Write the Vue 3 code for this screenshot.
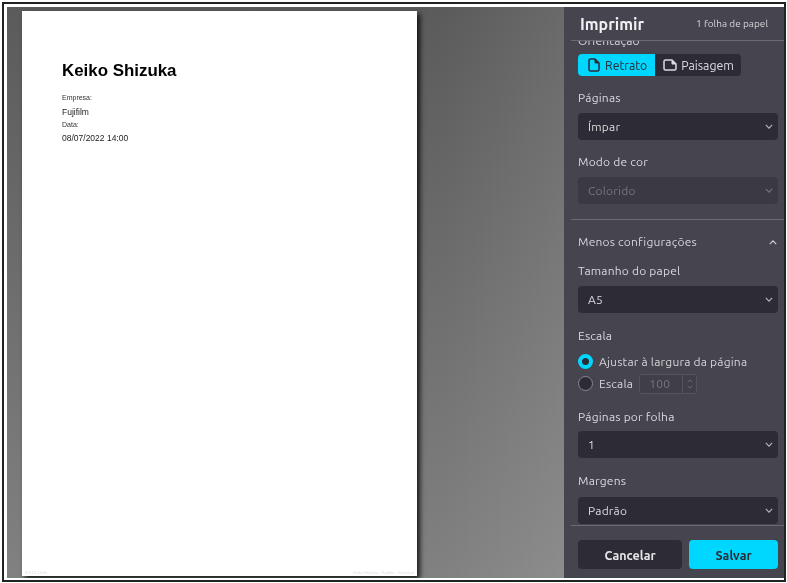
<script setup>
const chevron = 'M1 1l4 4 4-4'
const chevronUp = 'M1 5l4-4 4 4'
</script>

<template>
  <div class="frame">
    <div class="shell">
      <main class="preview">
        <div class="page">
          <h1 class="name">Keiko Shizuka</h1>
          <div class="lbl">Empresa:</div>
          <div class="val">Fujifilm</div>
          <div class="lbl tight">Data:</div>
          <div class="val">08/07/2022 14:00</div>
          <div class="foot"><span>8/7/22 14:00</span><span>Keiko Shizuka - Fujifilm - Relatório</span></div>
        </div>
      </main>
      <aside class="panel">
        <header class="head">
          <span class="title">Imprimir</span>
          <span class="sheets">1 folha de papel</span>
        </header>
        <div class="body">
          <div class="scroll">
            <div class="label clipped">Orientação</div>
            <div class="segs">
              <span class="seg on">
                <svg width="12" height="14" viewBox="0 0 12 14" fill="none" stroke="currentColor" stroke-width="1.5" stroke-linejoin="round"><path d="M1 2.500A1.500 1.500 0 0 1 2.500 1h4.500l4 4v6.500a1.500 1.500 0 0 1-1.500 1.500h-7A1.500 1.500 0 0 1 1 11.500z"/><path d="M7 1v4h4z" fill="currentColor" stroke-width="1"/></svg>
                Retrato
              </span>
              <span class="seg second">
                <svg width="14" height="12" viewBox="0 0 14 12" fill="none" stroke="currentColor" stroke-width="1.500" stroke-linejoin="round"><path d="M1 2.500A1.500 1.500 0 0 1 2.500 1H9l4 4v4.500a1.500 1.500 0 0 1-1.500 1.500h-9A1.500 1.500 0 0 1 1 9.500z"/><path d="M9 1v4h4z" fill="currentColor" stroke-width="1"/></svg>
                Paisagem
              </span>
            </div>

            <div class="label l-pages">Páginas</div>
            <div class="select"><span>Ímpar</span><svg width="8" height="5" viewBox="0 0 10 6"><path :d="chevron" /></svg></div>

            <div class="label l-color">Modo de cor</div>
            <div class="select off"><span>Colorido</span><svg width="8" height="5" viewBox="0 0 10 6"><path :d="chevron" /></svg></div>

            <div class="rule"></div>

            <div class="toggle"><span>Menos configurações</span><svg width="8" height="5" viewBox="0 0 10 6"><path :d="chevronUp" /></svg></div>

            <div class="label l-size">Tamanho do papel</div>
            <div class="select"><span>A5</span><svg width="8" height="5" viewBox="0 0 10 6"><path :d="chevron" /></svg></div>

            <div class="label l-scale">Escala</div>
            <div class="radios">
              <div class="radio-row"><span class="radio on"></span><span>Ajustar à largura da página</span></div>
              <div class="radio-row">
                <span class="radio"></span><span>Escala</span>
                <span class="num">
                  <span class="num-val">100</span>
                  <span class="spin">
                    <svg width="6" height="4" viewBox="0 0 10 6"><path :d="chevronUp" /></svg>
                    <svg width="6" height="4" viewBox="0 0 10 6"><path :d="chevron" /></svg>
                  </span>
                </span>
              </div>
            </div>

            <div class="label l-persheet">Páginas por folha</div>
            <div class="select"><span>1</span><svg width="8" height="5" viewBox="0 0 10 6"><path :d="chevron" /></svg></div>

            <div class="label l-margin">Margens</div>
            <div class="select"><span>Padrão</span><svg width="8" height="5" viewBox="0 0 10 6"><path :d="chevron" /></svg></div>
          </div>
        </div>
        <footer class="actions">
          <button class="btn cancel">Cancelar</button>
          <button class="btn save">Salvar</button>
        </footer>
      </aside>
    </div>
  </div>
</template>

<style>
html, body { margin: 0; background: #fff; overflow: hidden; }
</style>

<style scoped>
.frame {
  width: 784px;
  height: 580px;
  box-sizing: border-box;
  margin: 2px 0 0 2px;
  padding: 3px 0 2px 3px;
  border: 2px solid #222;
  background: #fff;
  overflow: hidden;
}
.shell { display: flex; height: 100%; filter: blur(.3px); }
.preview {
  flex: 1;
  min-width: 0;
  display: flex;
  align-items: flex-start;
  padding: 4px 0 0 15px;
  background:
    linear-gradient(90deg, rgba(255,255,255,0) 78%, rgba(255,255,255,.09) 100%),
    linear-gradient(180deg, #5b5b5b 0%, #818181 100%);
  overflow: hidden;
}
.page {
  position: relative;
  flex: none;
  box-sizing: border-box;
  width: 395px;
  height: 565px;
  padding: 50px 40px 0;
  background: #fff;
  box-shadow: 3px 3px 5px rgba(0,0,0,.8);
  font-family: "Liberation Sans", sans-serif;
  color: #111;
}
.name { margin: 0 0 12px; font-size: 16.9px; line-height: 20px; font-weight: 700; color: #000; }
.lbl { font-size: 7px; line-height: 9px; margin-bottom: 5px; color: #333; }
.lbl.tight { margin-bottom: 4px; }
.val { font-size: 8.5px; line-height: 10px; margin-bottom: 3px; color: #222; }
.foot {
  position: absolute; left: 0; right: 0; bottom: 1px; padding: 0 3px;
  display: flex; justify-content: space-between;
  font-size: 4px; line-height: 5px; color: #ddd;
}
.panel {
  width: 220px;
  flex: none;
  display: flex;
  flex-direction: column;
  background: #45444f;
  color: #d5d5d8;
  font-family: "Ubuntu", "Noto Sans", "Open Sans", sans-serif;
  font-size: 12px;
}
.head {
  height: 34px;
  flex: none;
  margin-left: 7px;
  padding: 0 16px 0 9px;
  box-sizing: border-box;
  display: flex;
  align-items: center;
  justify-content: space-between;
  border-bottom: 1px solid #6b6a73;
}
.title { font-size: 16px; font-weight: 700; color: #f1f1f3; }
.sheets { font-size: 10px; color: #d6d6da; }
.body { flex: 1; min-height: 0; overflow: hidden; }
.scroll { padding: 0 6px 0 14px; margin-top: -7px; }
.label { line-height: 14px; color: #dadadd; letter-spacing: .2px; }
.clipped { margin-bottom: 7px; height: 13px; }
.segs {
  display: inline-flex;
  height: 22px;
  background: #2c2b36;
  border-radius: 4px;
  overflow: hidden;
  vertical-align: top;
}
.seg {
  display: flex;
  align-items: center;
  gap: 5px;
  padding: 0 8px 0 10px;
  font-size: 12.3px;
  color: #dcdce0;
}
.seg.on { background: #00d7ff; color: #2c2b36; }
.seg.second { padding: 0 7px 0 8px; gap: 4px; }
.l-pages { margin-top: 15px; margin-bottom: 8px; }
.select {
  height: 27px;
  box-sizing: border-box;
  display: flex;
  align-items: center;
  justify-content: space-between;
  padding: 0 5px 0 10px;
  background: #2c2b36;
  border-radius: 4px;
  color: #dcdce0;
  letter-spacing: .2px;
}
.select svg, .toggle svg, .spin svg { fill: none; stroke: currentColor; stroke-width: 1.4; }
.select svg { color: #b9b9bd; }
.select.off { background: #3a3944; color: #77767f; }
.select.off svg { color: #77767f; }
.l-color { margin-top: 15px; margin-bottom: 8px; }
.rule { height: 1px; background: #6b6a73; margin: 15px -6px 0 -7px; }
.toggle {
  display: flex; align-items: center; justify-content: space-between;
  padding-right: 1px; margin-top: 15px; line-height: 14px; color: #d5d5d8; letter-spacing: .2px;
}
.l-size { margin-top: 15px; margin-bottom: 8px; }
.l-scale { margin-top: 16px; margin-bottom: 11px; }
.radios { display: flex; flex-direction: column; gap: 7px; }
.radio-row { display: flex; align-items: center; gap: 6px; height: 15px; color: #d5d5d8; letter-spacing: .2px; }
.radio {
  width: 15px; height: 15px; box-sizing: border-box; flex: none;
  border-radius: 50%; background: #2c2b36; border: 1px solid #8a8991;
}
.radio.on { border: 4px solid #00d7ff; background: #2c2b36; }
.num {
  display: flex; flex: none; height: 20px; width: 58px; box-sizing: border-box;
  border: 1px solid #55545e; border-radius: 3px; color: #77767f; background: #3f3e49;
}
.num-val { flex: 1; padding-left: 9px; line-height: 18px; }
.spin {
  width: 13px; border-left: 1px solid #55545e; display: flex; flex-direction: column;
  align-items: center; justify-content: center; gap: 2px;
}
.l-persheet { margin-top: 19px; margin-bottom: 7px; }
.l-margin { margin-top: 16px; margin-bottom: 9px; }
.actions {
  flex: none;
  margin-left: 7px;
  height: 53px;
  box-sizing: border-box;
  display: flex;
  gap: 7px;
  padding: 14px 6px 0 7px;
  border-top: 1px solid #6b6a73;
}
.btn {
  height: 29px; border: 0; border-radius: 4px; font-family: inherit; font-size: 12.5px; font-weight: 700; padding: 0;
}
.cancel { width: 104px; background: #2c2b36; color: #e6e6ea; }
.save { width: 89px; background: #00d7ff; color: #2c2b36; }
</style>
